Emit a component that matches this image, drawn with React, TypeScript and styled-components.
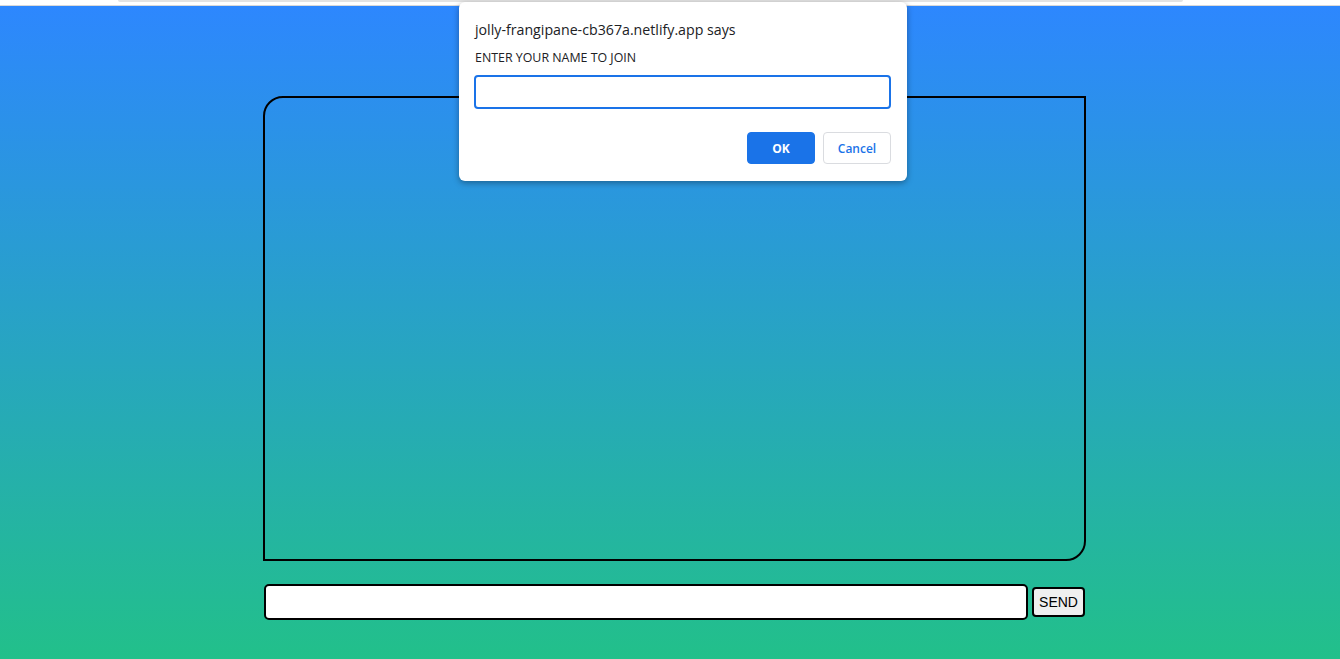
import styled, { createGlobalStyle } from "styled-components"

const GlobalStyle = createGlobalStyle`
  html, body {
    margin: 0;
    padding: 0;
    height: 100%;
    overflow: hidden;
  }
  #root {
    height: 100%;
  }
`

const Page = styled.div`
  position: relative;
  height: 659px;
  display: flex;
  flex-direction: column;
  font-family: "Liberation Sans", Arial, sans-serif;
`

const TopStrip = styled.div`
  height: 5px;
  background: #ffffff;
  border-bottom: 1px solid #d9d9d9;
  display: flex;
  padding-left: 118px;
`

const StripBar = styled.div`
  width: 1065px;
  height: 2px;
  background: #e3e3e3;
  border-radius: 0 0 3px 3px;
`

const Backdrop = styled.main`
  flex: 1;
  background: linear-gradient(180deg, #2d87fe 0%, #22c08a 100%);
  padding: 90px 0 0 263px;
`

const Chat = styled.div`
  width: 823px;
  display: flex;
  flex-direction: column;
  gap: 23px;
`

const Messages = styled.div`
  box-sizing: border-box;
  height: 465px;
  border: 2px solid #000;
  border-radius: 20px 0 20px 0;
`

const SendRow = styled.form`
  display: flex;
  align-items: center;
  gap: 4px;
  padding-left: 1px;
  margin: 0;
`

const MessageInput = styled.input`
  box-sizing: border-box;
  width: 764px;
  height: 36px;
  border: 2px solid #000;
  border-radius: 5px;
  background: #fff;
  outline: none;
`

const SendButton = styled.button`
  box-sizing: border-box;
  width: 53px;
  height: 30px;
  border: 2px solid #000;
  border-radius: 4px;
  background: #efefef;
  font-family: "Liberation Sans", Arial, sans-serif;
  font-size: 14px;
  color: #000;
  padding: 0;
`

const Dialog = styled.div`
  position: absolute;
  left: 459px;
  top: 2px;
  width: 448px;
  height: 179px;
  box-sizing: border-box;
  background: #fff;
  border-radius: 6px;
  box-shadow: 0 2px 6px rgba(0, 0, 0, 0.35);
  padding: 18px 16px 16px 16px;
  font-family: "Open Sans", "Noto Sans", sans-serif;
  display: flex;
  flex-direction: column;
`

const DialogTitle = styled.div`
  font-size: 14.2px;
  color: #202124;
  line-height: 20px;
`

const DialogLabel = styled.div`
  margin-top: 10px;
  font-size: 12.4px;
  color: #202124;
  line-height: 16px;
`

const DialogInput = styled.input`
  box-sizing: border-box;
  margin-top: 9px;
  height: 34px;
  width: 417px;
  margin-left: -1px;
  border: 2px solid #1a73e8;
  border-radius: 4px;
  outline: none;
`

const DialogActions = styled.div`
  margin-top: 23px;
  display: flex;
  justify-content: flex-end;
  gap: 8px;
`

const DialogButton = styled.button<{ $primary?: boolean }>`
  box-sizing: border-box;
  width: 68px;
  height: 32px;
  border-radius: 4px;
  font-family: "Open Sans", "Noto Sans", sans-serif;
  font-size: 12px;
  font-weight: ${p => (p.$primary ? 700 : 600)};
  padding: 0;
  border: 1px solid ${p => (p.$primary ? "#1a73e8" : "#dadce0")};
  background: ${p => (p.$primary ? "#1a73e8" : "#fff")};
  color: ${p => (p.$primary ? "#fff" : "#1a73e8")};
`

const App = () => {
  return (
    <Page>
      <GlobalStyle />
      <TopStrip>
        <StripBar />
      </TopStrip>
      <Backdrop>
        <Chat>
          <Messages />
          <SendRow onSubmit={e => e.preventDefault()}>
            <MessageInput type="text" />
            <SendButton type="submit">SEND</SendButton>
          </SendRow>
        </Chat>
      </Backdrop>
      <Dialog>
        <DialogTitle>jolly-frangipane-cb367a.netlify.app says</DialogTitle>
        <DialogLabel>ENTER YOUR NAME TO JOIN</DialogLabel>
        <DialogInput type="text" />
        <DialogActions>
          <DialogButton $primary>OK</DialogButton>
          <DialogButton>Cancel</DialogButton>
        </DialogActions>
      </Dialog>
    </Page>
  )
}

export default App
